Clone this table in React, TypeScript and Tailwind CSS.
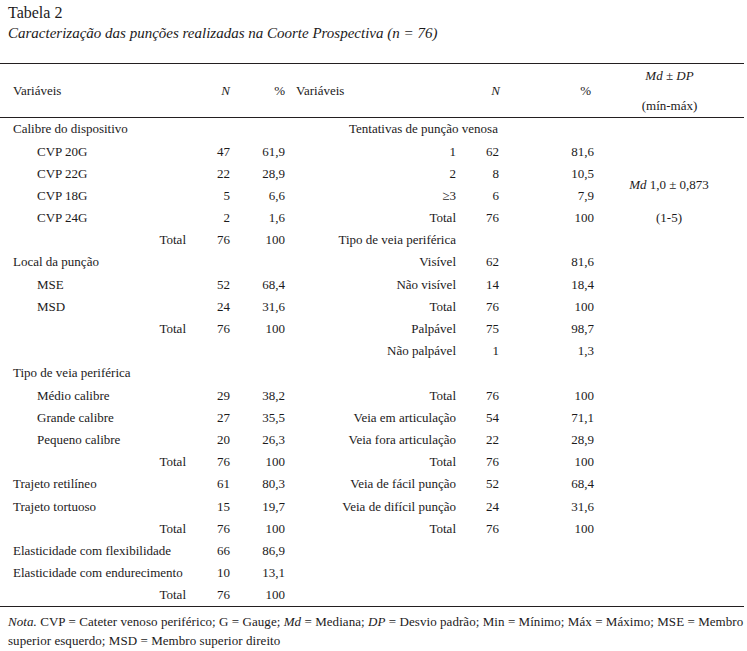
import React from "react";

type Side = {
  kind: "cat" | "ind" | "total" | "empty" | "span" | "right";
  label?: string;
  n?: string;
  pct?: string;
};

const leftRows: Side[] = [
  { kind: "cat", label: "Calibre do dispositivo" },
  { kind: "ind", label: "CVP 20G", n: "47", pct: "61,9" },
  { kind: "ind", label: "CVP 22G", n: "22", pct: "28,9" },
  { kind: "ind", label: "CVP 18G", n: "5", pct: "6,6" },
  { kind: "ind", label: "CVP 24G", n: "2", pct: "1,6" },
  { kind: "total", label: "Total", n: "76", pct: "100" },
  { kind: "cat", label: "Local da punção" },
  { kind: "ind", label: "MSE", n: "52", pct: "68,4" },
  { kind: "ind", label: "MSD", n: "24", pct: "31,6" },
  { kind: "total", label: "Total", n: "76", pct: "100" },
  { kind: "empty" },
  { kind: "cat", label: "Tipo de veia periférica" },
  { kind: "ind", label: "Médio calibre", n: "29", pct: "38,2" },
  { kind: "ind", label: "Grande calibre", n: "27", pct: "35,5" },
  { kind: "ind", label: "Pequeno calibre", n: "20", pct: "26,3" },
  { kind: "total", label: "Total", n: "76", pct: "100" },
  { kind: "cat", label: "Trajeto retilíneo", n: "61", pct: "80,3" },
  { kind: "cat", label: "Trajeto tortuoso", n: "15", pct: "19,7" },
  { kind: "total", label: "Total", n: "76", pct: "100" },
  { kind: "cat", label: "Elasticidade com flexibilidade", n: "66", pct: "86,9" },
  { kind: "cat", label: "Elasticidade com endurecimento", n: "10", pct: "13,1" },
  { kind: "total", label: "Total", n: "76", pct: "100" },
];

const rightRows: Side[] = [
  { kind: "span", label: "Tentativas de punção venosa" },
  { kind: "right", label: "1", n: "62", pct: "81,6" },
  { kind: "right", label: "2", n: "8", pct: "10,5" },
  { kind: "right", label: "≥3", n: "6", pct: "7,9" },
  { kind: "right", label: "Total", n: "76", pct: "100" },
  { kind: "right", label: "Tipo de veia periférica" },
  { kind: "right", label: "Visível", n: "62", pct: "81,6" },
  { kind: "right", label: "Não visível", n: "14", pct: "18,4" },
  { kind: "right", label: "Total", n: "76", pct: "100" },
  { kind: "right", label: "Palpável", n: "75", pct: "98,7" },
  { kind: "right", label: "Não palpável", n: "1", pct: "1,3" },
  { kind: "empty" },
  { kind: "right", label: "Total", n: "76", pct: "100" },
  { kind: "right", label: "Veia em articulação", n: "54", pct: "71,1" },
  { kind: "right", label: "Veia fora articulação", n: "22", pct: "28,9" },
  { kind: "right", label: "Total", n: "76", pct: "100" },
  { kind: "right", label: "Veia de fácil punção", n: "52", pct: "68,4" },
  { kind: "right", label: "Veia de difícil punção", n: "24", pct: "31,6" },
  { kind: "right", label: "Total", n: "76", pct: "100" },
  { kind: "empty" },
  { kind: "empty" },
  { kind: "empty" },
];

function LeftCells({ row }: { row: Side }) {
  const labelClass =
    row.kind === "total"
      ? "text-right pr-[4px]"
      : row.kind === "ind"
      ? "pl-[37px]"
      : "pl-[13px]";
  return (
    <>
      <div className={`w-[190px] whitespace-nowrap ${labelClass}`}>
        {row.label}
      </div>
      <div className="w-[40px] text-right">{row.n}</div>
      <div className="w-[55px] text-right">{row.pct}</div>
    </>
  );
}

function RightCells({ row }: { row: Side }) {
  if (row.kind === "span") {
    return (
      <div className="w-[309px] whitespace-nowrap pl-[64px]">{row.label}</div>
    );
  }
  return (
    <>
      <div className="w-[172px] whitespace-nowrap text-right pr-[1px]">
        {row.label}
      </div>
      <div className="w-[42px] text-right">{row.n}</div>
      <div className="w-[95px] text-right">{row.pct}</div>
    </>
  );
}

export default function App() {
  return (
    <div className="w-[747px] h-[651px] overflow-hidden bg-white text-[#1c1a1b] font-['Liberation_Serif','Times_New_Roman',serif]">
      <div className="pl-[8px] pt-[3px] text-[15px] leading-[20px]">
        <div className="text-[16px]">Tabela 2</div>
        <div className="italic">
          Caracterização das punções realizadas na Coorte Prospectiva (n = 76)
        </div>
      </div>

      <div className="mt-[20px] w-[744px] text-[13px]">
        <div className="border-t border-[#231f20]" />
        <div className="flex h-[53px] items-center">
          <div className="w-[190px] pl-[13px]">Variáveis</div>
          <div className="w-[40px] text-right italic">N</div>
          <div className="w-[55px] text-right">%</div>
          <div className="w-[172px] pl-[11px]">Variáveis</div>
          <div className="w-[43px] text-right italic">N</div>
          <div className="w-[91px] text-right">%</div>
          <div className="flex flex-1 flex-col items-center gap-[11px] pl-[4px]">
            <div className="italic">Md ± DP</div>
            <div>(mín-máx)</div>
          </div>
        </div>
        <div className="border-t border-[#231f20]" />

        <div className="flex">
          <div className="w-[594px]">
            {leftRows.map((l, i) => (
              <div key={i} className="flex h-[22.2px] items-center">
                <LeftCells row={l} />
                <RightCells row={rightRows[i]} />
              </div>
            ))}
          </div>
          <div className="flex flex-1 flex-col items-center">
            <div className="h-[44.4px]" />
            <div className="flex h-[44.4px] items-center">
              <span className="italic">Md</span>&nbsp;1,0 ± 0,873
            </div>
            <div className="flex h-[22.2px] items-center">(1-5)</div>
          </div>
        </div>
        <div className="border-t border-[#231f20]" />

        <div className="pl-[8px] pt-[5px] leading-[19px] whitespace-nowrap tracking-[0.06px]">
          <span className="italic">Nota.</span> CVP = Cateter venoso
          periférico; G = Gauge; <span className="italic">Md</span> = Mediana;{" "}
          <span className="italic">DP</span> = Desvio padrão; Min = Mínimo; Máx
          = Máximo; MSE = Membro
          <br />
          superior esquerdo; MSD = Membro superior direito
        </div>
      </div>
    </div>
  );
}
